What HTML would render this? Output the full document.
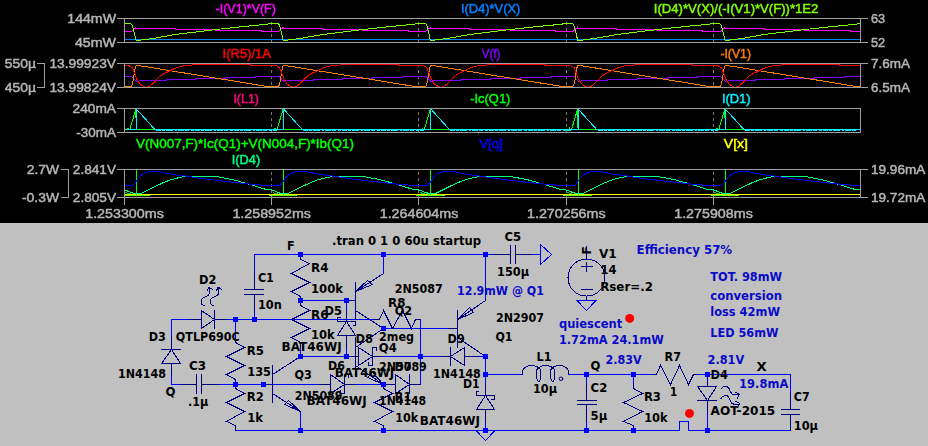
<!DOCTYPE html>
<html><head><meta charset="utf-8"><title>LTspice</title>
<style>
html,body{margin:0;padding:0;background:#c0c0c0;}
body{width:928px;height:446px;overflow:hidden;}
svg{display:block}
</style></head><body>
<svg width="928" height="446" viewBox="0 0 928 446">
<defs><filter id="nf" x="0" y="0" width="928" height="446" filterUnits="userSpaceOnUse"><feOffset dx="0" dy="0"/></filter></defs>
<rect x="0" y="0" width="928" height="446" fill="#c0c0c0"/>
<g shape-rendering="crispEdges">
<rect x="0" y="0" width="928" height="223" fill="#000"/>
<rect x="271" y="22" width="1" height="1" fill="#787878"/>
<rect x="271" y="23" width="1" height="1" fill="#787878"/>
<rect x="271" y="24" width="1" height="1" fill="#787878"/>
<rect x="271" y="28" width="1" height="1" fill="#787878"/>
<rect x="271" y="29" width="1" height="1" fill="#787878"/>
<rect x="271" y="30" width="1" height="1" fill="#787878"/>
<rect x="271" y="34" width="1" height="1" fill="#787878"/>
<rect x="271" y="35" width="1" height="1" fill="#787878"/>
<rect x="271" y="36" width="1" height="1" fill="#787878"/>
<rect x="271" y="40" width="1" height="1" fill="#787878"/>
<rect x="271" y="41" width="1" height="1" fill="#787878"/>
<rect x="418" y="22" width="1" height="1" fill="#787878"/>
<rect x="418" y="23" width="1" height="1" fill="#787878"/>
<rect x="418" y="24" width="1" height="1" fill="#787878"/>
<rect x="418" y="28" width="1" height="1" fill="#787878"/>
<rect x="418" y="29" width="1" height="1" fill="#787878"/>
<rect x="418" y="30" width="1" height="1" fill="#787878"/>
<rect x="418" y="34" width="1" height="1" fill="#787878"/>
<rect x="418" y="35" width="1" height="1" fill="#787878"/>
<rect x="418" y="36" width="1" height="1" fill="#787878"/>
<rect x="418" y="40" width="1" height="1" fill="#787878"/>
<rect x="418" y="41" width="1" height="1" fill="#787878"/>
<rect x="566" y="22" width="1" height="1" fill="#787878"/>
<rect x="566" y="23" width="1" height="1" fill="#787878"/>
<rect x="566" y="24" width="1" height="1" fill="#787878"/>
<rect x="566" y="28" width="1" height="1" fill="#787878"/>
<rect x="566" y="29" width="1" height="1" fill="#787878"/>
<rect x="566" y="30" width="1" height="1" fill="#787878"/>
<rect x="566" y="34" width="1" height="1" fill="#787878"/>
<rect x="566" y="35" width="1" height="1" fill="#787878"/>
<rect x="566" y="36" width="1" height="1" fill="#787878"/>
<rect x="566" y="40" width="1" height="1" fill="#787878"/>
<rect x="566" y="41" width="1" height="1" fill="#787878"/>
<rect x="713" y="22" width="1" height="1" fill="#787878"/>
<rect x="713" y="23" width="1" height="1" fill="#787878"/>
<rect x="713" y="24" width="1" height="1" fill="#787878"/>
<rect x="713" y="28" width="1" height="1" fill="#787878"/>
<rect x="713" y="29" width="1" height="1" fill="#787878"/>
<rect x="713" y="30" width="1" height="1" fill="#787878"/>
<rect x="713" y="34" width="1" height="1" fill="#787878"/>
<rect x="713" y="35" width="1" height="1" fill="#787878"/>
<rect x="713" y="36" width="1" height="1" fill="#787878"/>
<rect x="713" y="40" width="1" height="1" fill="#787878"/>
<rect x="713" y="41" width="1" height="1" fill="#787878"/>
<rect x="271" y="65" width="1" height="1" fill="#787878"/>
<rect x="271" y="66" width="1" height="1" fill="#787878"/>
<rect x="271" y="70" width="1" height="1" fill="#787878"/>
<rect x="271" y="71" width="1" height="1" fill="#787878"/>
<rect x="271" y="72" width="1" height="1" fill="#787878"/>
<rect x="271" y="76" width="1" height="1" fill="#787878"/>
<rect x="271" y="77" width="1" height="1" fill="#787878"/>
<rect x="271" y="78" width="1" height="1" fill="#787878"/>
<rect x="271" y="82" width="1" height="1" fill="#787878"/>
<rect x="271" y="83" width="1" height="1" fill="#787878"/>
<rect x="271" y="84" width="1" height="1" fill="#787878"/>
<rect x="418" y="65" width="1" height="1" fill="#787878"/>
<rect x="418" y="66" width="1" height="1" fill="#787878"/>
<rect x="418" y="70" width="1" height="1" fill="#787878"/>
<rect x="418" y="71" width="1" height="1" fill="#787878"/>
<rect x="418" y="72" width="1" height="1" fill="#787878"/>
<rect x="418" y="76" width="1" height="1" fill="#787878"/>
<rect x="418" y="77" width="1" height="1" fill="#787878"/>
<rect x="418" y="78" width="1" height="1" fill="#787878"/>
<rect x="418" y="82" width="1" height="1" fill="#787878"/>
<rect x="418" y="83" width="1" height="1" fill="#787878"/>
<rect x="418" y="84" width="1" height="1" fill="#787878"/>
<rect x="566" y="65" width="1" height="1" fill="#787878"/>
<rect x="566" y="66" width="1" height="1" fill="#787878"/>
<rect x="566" y="70" width="1" height="1" fill="#787878"/>
<rect x="566" y="71" width="1" height="1" fill="#787878"/>
<rect x="566" y="72" width="1" height="1" fill="#787878"/>
<rect x="566" y="76" width="1" height="1" fill="#787878"/>
<rect x="566" y="77" width="1" height="1" fill="#787878"/>
<rect x="566" y="78" width="1" height="1" fill="#787878"/>
<rect x="566" y="82" width="1" height="1" fill="#787878"/>
<rect x="566" y="83" width="1" height="1" fill="#787878"/>
<rect x="566" y="84" width="1" height="1" fill="#787878"/>
<rect x="713" y="65" width="1" height="1" fill="#787878"/>
<rect x="713" y="66" width="1" height="1" fill="#787878"/>
<rect x="713" y="70" width="1" height="1" fill="#787878"/>
<rect x="713" y="71" width="1" height="1" fill="#787878"/>
<rect x="713" y="72" width="1" height="1" fill="#787878"/>
<rect x="713" y="76" width="1" height="1" fill="#787878"/>
<rect x="713" y="77" width="1" height="1" fill="#787878"/>
<rect x="713" y="78" width="1" height="1" fill="#787878"/>
<rect x="713" y="82" width="1" height="1" fill="#787878"/>
<rect x="713" y="83" width="1" height="1" fill="#787878"/>
<rect x="713" y="84" width="1" height="1" fill="#787878"/>
<rect x="271" y="112" width="1" height="1" fill="#787878"/>
<rect x="271" y="113" width="1" height="1" fill="#787878"/>
<rect x="271" y="114" width="1" height="1" fill="#787878"/>
<rect x="271" y="118" width="1" height="1" fill="#787878"/>
<rect x="271" y="119" width="1" height="1" fill="#787878"/>
<rect x="271" y="120" width="1" height="1" fill="#787878"/>
<rect x="271" y="124" width="1" height="1" fill="#787878"/>
<rect x="271" y="125" width="1" height="1" fill="#787878"/>
<rect x="271" y="126" width="1" height="1" fill="#787878"/>
<rect x="271" y="130" width="1" height="1" fill="#787878"/>
<rect x="271" y="131" width="1" height="1" fill="#787878"/>
<rect x="418" y="112" width="1" height="1" fill="#787878"/>
<rect x="418" y="113" width="1" height="1" fill="#787878"/>
<rect x="418" y="114" width="1" height="1" fill="#787878"/>
<rect x="418" y="118" width="1" height="1" fill="#787878"/>
<rect x="418" y="119" width="1" height="1" fill="#787878"/>
<rect x="418" y="120" width="1" height="1" fill="#787878"/>
<rect x="418" y="124" width="1" height="1" fill="#787878"/>
<rect x="418" y="125" width="1" height="1" fill="#787878"/>
<rect x="418" y="126" width="1" height="1" fill="#787878"/>
<rect x="418" y="130" width="1" height="1" fill="#787878"/>
<rect x="418" y="131" width="1" height="1" fill="#787878"/>
<rect x="566" y="112" width="1" height="1" fill="#787878"/>
<rect x="566" y="113" width="1" height="1" fill="#787878"/>
<rect x="566" y="114" width="1" height="1" fill="#787878"/>
<rect x="566" y="118" width="1" height="1" fill="#787878"/>
<rect x="566" y="119" width="1" height="1" fill="#787878"/>
<rect x="566" y="120" width="1" height="1" fill="#787878"/>
<rect x="566" y="124" width="1" height="1" fill="#787878"/>
<rect x="566" y="125" width="1" height="1" fill="#787878"/>
<rect x="566" y="126" width="1" height="1" fill="#787878"/>
<rect x="566" y="130" width="1" height="1" fill="#787878"/>
<rect x="566" y="131" width="1" height="1" fill="#787878"/>
<rect x="713" y="112" width="1" height="1" fill="#787878"/>
<rect x="713" y="113" width="1" height="1" fill="#787878"/>
<rect x="713" y="114" width="1" height="1" fill="#787878"/>
<rect x="713" y="118" width="1" height="1" fill="#787878"/>
<rect x="713" y="119" width="1" height="1" fill="#787878"/>
<rect x="713" y="120" width="1" height="1" fill="#787878"/>
<rect x="713" y="124" width="1" height="1" fill="#787878"/>
<rect x="713" y="125" width="1" height="1" fill="#787878"/>
<rect x="713" y="126" width="1" height="1" fill="#787878"/>
<rect x="713" y="130" width="1" height="1" fill="#787878"/>
<rect x="713" y="131" width="1" height="1" fill="#787878"/>
<rect x="271" y="172" width="1" height="1" fill="#787878"/>
<rect x="271" y="173" width="1" height="1" fill="#787878"/>
<rect x="271" y="174" width="1" height="1" fill="#787878"/>
<rect x="271" y="178" width="1" height="1" fill="#787878"/>
<rect x="271" y="179" width="1" height="1" fill="#787878"/>
<rect x="271" y="180" width="1" height="1" fill="#787878"/>
<rect x="271" y="184" width="1" height="1" fill="#787878"/>
<rect x="271" y="185" width="1" height="1" fill="#787878"/>
<rect x="271" y="186" width="1" height="1" fill="#787878"/>
<rect x="271" y="190" width="1" height="1" fill="#787878"/>
<rect x="271" y="191" width="1" height="1" fill="#787878"/>
<rect x="271" y="192" width="1" height="1" fill="#787878"/>
<rect x="271" y="196" width="1" height="1" fill="#787878"/>
<rect x="418" y="172" width="1" height="1" fill="#787878"/>
<rect x="418" y="173" width="1" height="1" fill="#787878"/>
<rect x="418" y="174" width="1" height="1" fill="#787878"/>
<rect x="418" y="178" width="1" height="1" fill="#787878"/>
<rect x="418" y="179" width="1" height="1" fill="#787878"/>
<rect x="418" y="180" width="1" height="1" fill="#787878"/>
<rect x="418" y="184" width="1" height="1" fill="#787878"/>
<rect x="418" y="185" width="1" height="1" fill="#787878"/>
<rect x="418" y="186" width="1" height="1" fill="#787878"/>
<rect x="418" y="190" width="1" height="1" fill="#787878"/>
<rect x="418" y="191" width="1" height="1" fill="#787878"/>
<rect x="418" y="192" width="1" height="1" fill="#787878"/>
<rect x="418" y="196" width="1" height="1" fill="#787878"/>
<rect x="566" y="172" width="1" height="1" fill="#787878"/>
<rect x="566" y="173" width="1" height="1" fill="#787878"/>
<rect x="566" y="174" width="1" height="1" fill="#787878"/>
<rect x="566" y="178" width="1" height="1" fill="#787878"/>
<rect x="566" y="179" width="1" height="1" fill="#787878"/>
<rect x="566" y="180" width="1" height="1" fill="#787878"/>
<rect x="566" y="184" width="1" height="1" fill="#787878"/>
<rect x="566" y="185" width="1" height="1" fill="#787878"/>
<rect x="566" y="186" width="1" height="1" fill="#787878"/>
<rect x="566" y="190" width="1" height="1" fill="#787878"/>
<rect x="566" y="191" width="1" height="1" fill="#787878"/>
<rect x="566" y="192" width="1" height="1" fill="#787878"/>
<rect x="566" y="196" width="1" height="1" fill="#787878"/>
<rect x="713" y="172" width="1" height="1" fill="#787878"/>
<rect x="713" y="173" width="1" height="1" fill="#787878"/>
<rect x="713" y="174" width="1" height="1" fill="#787878"/>
<rect x="713" y="178" width="1" height="1" fill="#787878"/>
<rect x="713" y="179" width="1" height="1" fill="#787878"/>
<rect x="713" y="180" width="1" height="1" fill="#787878"/>
<rect x="713" y="184" width="1" height="1" fill="#787878"/>
<rect x="713" y="185" width="1" height="1" fill="#787878"/>
<rect x="713" y="186" width="1" height="1" fill="#787878"/>
<rect x="713" y="190" width="1" height="1" fill="#787878"/>
<rect x="713" y="191" width="1" height="1" fill="#787878"/>
<rect x="713" y="192" width="1" height="1" fill="#787878"/>
<rect x="713" y="196" width="1" height="1" fill="#787878"/>
<polyline points="124.50,39.50 271.75,39.50 271.75,39.50 419.00,39.50 419.00,39.50 566.25,39.50 566.25,39.50 713.50,39.50 713.50,39.50 860.50,39.50" fill="none" stroke="#0080ff" stroke-width="1" />
<polyline points="124.50,31.50 131.00,31.50 132.50,30.50 134.00,28.50 135.30,28.40 135.80,27.40 136.40,28.40 175.00,28.40 175.00,29.50 215.50,29.50 215.50,30.50 261.20,30.50 261.20,31.50 271.75,31.50 271.75,31.50 278.25,31.50 279.75,30.50 281.25,28.50 282.55,28.40 283.05,27.40 283.65,28.40 322.25,28.40 322.25,29.50 362.75,29.50 362.75,30.50 408.45,30.50 408.45,31.50 419.00,31.50 419.00,31.50 425.50,31.50 427.00,30.50 428.50,28.50 429.80,28.40 430.30,27.40 430.90,28.40 469.50,28.40 469.50,29.50 510.00,29.50 510.00,30.50 555.70,30.50 555.70,31.50 566.25,31.50 566.25,31.50 572.75,31.50 574.25,30.50 575.75,28.50 577.05,28.40 577.55,27.40 578.15,28.40 616.75,28.40 616.75,29.50 657.25,29.50 657.25,30.50 702.95,30.50 702.95,31.50 713.50,31.50 713.50,31.50 720.00,31.50 721.50,30.50 723.00,28.50 724.30,28.40 724.80,27.40 725.40,28.40 764.00,28.40 764.00,29.50 804.50,29.50 804.50,30.50 850.20,30.50 850.20,31.50 860.50,31.50" fill="none" stroke="#ff00ff" stroke-width="1" />
<polyline points="124.50,23.50 130.70,23.50 131.80,24.50 132.80,27.00 133.70,30.50 134.70,35.00 135.70,39.50 136.10,40.40 138.00,40.40 154.00,38.30 175.30,34.50 216.00,29.50 244.50,26.40 267.50,24.20 269.00,23.50 271.75,23.50 271.75,23.50 277.95,23.50 279.05,24.50 280.05,27.00 280.95,30.50 281.95,35.00 282.95,39.50 283.35,40.40 285.25,40.40 301.25,38.30 322.55,34.50 363.25,29.50 391.75,26.40 414.75,24.20 416.25,23.50 419.00,23.50 419.00,23.50 425.20,23.50 426.30,24.50 427.30,27.00 428.20,30.50 429.20,35.00 430.20,39.50 430.60,40.40 432.50,40.40 448.50,38.30 469.80,34.50 510.50,29.50 539.00,26.40 562.00,24.20 563.50,23.50 566.25,23.50 566.25,23.50 572.45,23.50 573.55,24.50 574.55,27.00 575.45,30.50 576.45,35.00 577.45,39.50 577.85,40.40 579.75,40.40 595.75,38.30 617.05,34.50 657.75,29.50 686.25,26.40 709.25,24.20 710.75,23.50 713.50,23.50 713.50,23.50 719.70,23.50 720.80,24.50 721.80,27.00 722.70,30.50 723.70,35.00 724.70,39.50 725.10,40.40 727.00,40.40 743.00,38.30 764.30,34.50 805.00,29.50 833.50,26.40 856.50,24.20 858.00,23.50 860.50,23.50" fill="none" stroke="#80ff00" stroke-width="1" />
<polyline points="124.50,76.50 131.50,76.50 133.50,78.00 135.00,80.00 136.50,81.40 138.50,81.40 140.00,80.40 166.00,80.40 166.00,79.40 195.50,79.40 195.50,78.40 225.50,78.40 225.50,77.40 255.50,77.40 255.50,76.50 271.75,76.50 271.75,76.50 278.75,76.50 280.75,78.00 282.25,80.00 283.75,81.40 285.75,81.40 287.25,80.40 313.25,80.40 313.25,79.40 342.75,79.40 342.75,78.40 372.75,78.40 372.75,77.40 402.75,77.40 402.75,76.50 419.00,76.50 419.00,76.50 426.00,76.50 428.00,78.00 429.50,80.00 431.00,81.40 433.00,81.40 434.50,80.40 460.50,80.40 460.50,79.40 490.00,79.40 490.00,78.40 520.00,78.40 520.00,77.40 550.00,77.40 550.00,76.50 566.25,76.50 566.25,76.50 573.25,76.50 575.25,78.00 576.75,80.00 578.25,81.40 580.25,81.40 581.75,80.40 607.75,80.40 607.75,79.40 637.25,79.40 637.25,78.40 667.25,78.40 667.25,77.40 697.25,77.40 697.25,76.50 713.50,76.50 713.50,76.50 720.50,76.50 722.50,78.00 724.00,80.00 725.50,81.40 727.50,81.40 729.00,80.40 755.00,80.40 755.00,79.40 784.50,79.40 784.50,78.40 814.50,78.40 814.50,77.40 844.50,77.40 844.50,76.50 860.50,76.50" fill="none" stroke="#8000ff" stroke-width="1" />
<polyline points="124.50,86.50 131.00,86.50 132.00,85.00 133.20,80.00 134.10,74.00 135.10,68.00 136.00,65.70 137.50,65.50 144.50,66.50 267.50,86.50 271.75,86.50 271.75,86.50 278.25,86.50 279.25,85.00 280.45,80.00 281.35,74.00 282.35,68.00 283.25,65.70 284.75,65.50 291.75,66.50 414.75,86.50 419.00,86.50 419.00,86.50 425.50,86.50 426.50,85.00 427.70,80.00 428.60,74.00 429.60,68.00 430.50,65.70 432.00,65.50 439.00,66.50 562.00,86.50 566.25,86.50 566.25,86.50 572.75,86.50 573.75,85.00 574.95,80.00 575.85,74.00 576.85,68.00 577.75,65.70 579.25,65.50 586.25,66.50 709.25,86.50 713.50,86.50 713.50,86.50 720.00,86.50 721.00,85.00 722.20,80.00 723.10,74.00 724.10,68.00 725.00,65.70 726.50,65.50 733.50,66.50 856.50,86.50 860.50,86.50" fill="none" stroke="#ff8000" stroke-width="1" />
<polyline points="124.50,65.50 128.50,65.50 132.30,67.60 134.80,73.80 136.70,78.90 139.80,83.90 143.00,86.10 146.10,87.30 149.20,86.40 152.40,84.10 156.20,80.10 159.90,76.30 163.70,73.80 166.80,72.30 171.20,70.10 176.20,67.80 181.20,66.30 186.30,65.30 192.50,65.00 195.50,64.50 250.90,64.50 250.90,65.50 271.75,65.50 271.75,65.50 275.75,65.50 279.55,67.60 282.05,73.80 283.95,78.90 287.05,83.90 290.25,86.10 293.35,87.30 296.45,86.40 299.65,84.10 303.45,80.10 307.15,76.30 310.95,73.80 314.05,72.30 318.45,70.10 323.45,67.80 328.45,66.30 333.55,65.30 339.75,65.00 342.75,64.50 398.15,64.50 398.15,65.50 419.00,65.50 419.00,65.50 423.00,65.50 426.80,67.60 429.30,73.80 431.20,78.90 434.30,83.90 437.50,86.10 440.60,87.30 443.70,86.40 446.90,84.10 450.70,80.10 454.40,76.30 458.20,73.80 461.30,72.30 465.70,70.10 470.70,67.80 475.70,66.30 480.80,65.30 487.00,65.00 490.00,64.50 545.40,64.50 545.40,65.50 566.25,65.50 566.25,65.50 570.25,65.50 574.05,67.60 576.55,73.80 578.45,78.90 581.55,83.90 584.75,86.10 587.85,87.30 590.95,86.40 594.15,84.10 597.95,80.10 601.65,76.30 605.45,73.80 608.55,72.30 612.95,70.10 617.95,67.80 622.95,66.30 628.05,65.30 634.25,65.00 637.25,64.50 692.65,64.50 692.65,65.50 713.50,65.50 713.50,65.50 717.50,65.50 721.30,67.60 723.80,73.80 725.70,78.90 728.80,83.90 732.00,86.10 735.10,87.30 738.20,86.40 741.40,84.10 745.20,80.10 748.90,76.30 752.70,73.80 755.80,72.30 760.20,70.10 765.20,67.80 770.20,66.30 775.30,65.30 781.50,65.00 784.50,64.50 839.90,64.50 839.90,65.50 860.50,65.50" fill="none" stroke="#ff0000" stroke-width="1" />
<polyline points="124.50,129.50 127.00,129.50 127.80,128.30 128.80,129.50 129.80,129.50 135.80,109.30 136.30,129.50 154.90,129.50 271.75,129.50 271.75,129.50 274.25,129.50 275.05,128.30 276.05,129.50 277.05,129.50 283.05,109.30 283.55,129.50 302.15,129.50 419.00,129.50 419.00,129.50 421.50,129.50 422.30,128.30 423.30,129.50 424.30,129.50 430.30,109.30 430.80,129.50 449.40,129.50 566.25,129.50 566.25,129.50 568.75,129.50 569.55,128.30 570.55,129.50 571.55,129.50 577.55,109.30 578.05,129.50 596.65,129.50 713.50,129.50 713.50,129.50 716.00,129.50 716.80,128.30 717.80,129.50 718.80,129.50 724.80,109.30 725.30,129.50 743.90,129.50 860.50,129.50" fill="none" stroke="#00ff00" stroke-width="1" />
<rect x="135.0" y="108" width="1.5" height="1" fill="#ff0080"/>
<rect x="282.2" y="108" width="1.5" height="1" fill="#ff0080"/>
<rect x="429.5" y="108" width="1.5" height="1" fill="#ff0080"/>
<rect x="576.8" y="108" width="1.5" height="1" fill="#ff0080"/>
<rect x="724.0" y="108" width="1.5" height="1" fill="#ff0080"/>
<polyline points="124.50,129.50 136.40,129.50 136.40,109.50 136.80,109.50 154.90,129.50 271.75,129.50 271.75,129.50 283.65,129.50 283.65,109.50 284.05,109.50 302.15,129.50 419.00,129.50 419.00,129.50 430.90,129.50 430.90,109.50 431.30,109.50 449.40,129.50 566.25,129.50 566.25,129.50 578.15,129.50 578.15,109.50 578.55,109.50 596.65,129.50 713.50,129.50 713.50,129.50 725.40,129.50 725.40,109.50 725.80,109.50 743.90,129.50 860.50,129.50" fill="none" stroke="#00f0ff" stroke-width="1" />
<rect x="154.9" y="129" width="121.8" height="1" fill="#00f0ff"/>
<rect x="155.9" y="130" width="5" height="1" fill="#00f0ff"/>
<rect x="161.9" y="130" width="3" height="1" fill="#00f0ff"/>
<rect x="165.9" y="130" width="7" height="1" fill="#00f0ff"/>
<rect x="174.9" y="130" width="2" height="1" fill="#00f0ff"/>
<rect x="177.9" y="130" width="6" height="1" fill="#00f0ff"/>
<rect x="184.9" y="130" width="4" height="1" fill="#00f0ff"/>
<rect x="190.9" y="130" width="3" height="1" fill="#00f0ff"/>
<rect x="194.9" y="130" width="5" height="1" fill="#00f0ff"/>
<rect x="200.9" y="130" width="3" height="1" fill="#00f0ff"/>
<rect x="204.9" y="130" width="7" height="1" fill="#00f0ff"/>
<rect x="213.9" y="130" width="2" height="1" fill="#00f0ff"/>
<rect x="216.9" y="130" width="6" height="1" fill="#00f0ff"/>
<rect x="223.9" y="130" width="4" height="1" fill="#00f0ff"/>
<rect x="229.9" y="130" width="3" height="1" fill="#00f0ff"/>
<rect x="233.9" y="130" width="5" height="1" fill="#00f0ff"/>
<rect x="239.9" y="130" width="3" height="1" fill="#00f0ff"/>
<rect x="243.9" y="130" width="7" height="1" fill="#00f0ff"/>
<rect x="252.9" y="130" width="2" height="1" fill="#00f0ff"/>
<rect x="255.9" y="130" width="6" height="1" fill="#00f0ff"/>
<rect x="262.9" y="130" width="4" height="1" fill="#00f0ff"/>
<rect x="268.9" y="130" width="3" height="1" fill="#00f0ff"/>
<rect x="272.9" y="130" width="3.8500000000000227" height="1" fill="#00f0ff"/>
<rect x="302.1" y="129" width="121.9" height="1" fill="#00f0ff"/>
<rect x="303.1" y="130" width="5" height="1" fill="#00f0ff"/>
<rect x="309.1" y="130" width="3" height="1" fill="#00f0ff"/>
<rect x="313.1" y="130" width="7" height="1" fill="#00f0ff"/>
<rect x="322.1" y="130" width="2" height="1" fill="#00f0ff"/>
<rect x="325.1" y="130" width="6" height="1" fill="#00f0ff"/>
<rect x="332.1" y="130" width="4" height="1" fill="#00f0ff"/>
<rect x="338.1" y="130" width="3" height="1" fill="#00f0ff"/>
<rect x="342.1" y="130" width="5" height="1" fill="#00f0ff"/>
<rect x="348.1" y="130" width="3" height="1" fill="#00f0ff"/>
<rect x="352.1" y="130" width="7" height="1" fill="#00f0ff"/>
<rect x="361.1" y="130" width="2" height="1" fill="#00f0ff"/>
<rect x="364.1" y="130" width="6" height="1" fill="#00f0ff"/>
<rect x="371.1" y="130" width="4" height="1" fill="#00f0ff"/>
<rect x="377.1" y="130" width="3" height="1" fill="#00f0ff"/>
<rect x="381.1" y="130" width="5" height="1" fill="#00f0ff"/>
<rect x="387.1" y="130" width="3" height="1" fill="#00f0ff"/>
<rect x="391.1" y="130" width="7" height="1" fill="#00f0ff"/>
<rect x="400.1" y="130" width="2" height="1" fill="#00f0ff"/>
<rect x="403.1" y="130" width="6" height="1" fill="#00f0ff"/>
<rect x="410.1" y="130" width="4" height="1" fill="#00f0ff"/>
<rect x="416.1" y="130" width="3" height="1" fill="#00f0ff"/>
<rect x="420.1" y="130" width="3.8500000000000227" height="1" fill="#00f0ff"/>
<rect x="449.4" y="129" width="121.9" height="1" fill="#00f0ff"/>
<rect x="450.4" y="130" width="5" height="1" fill="#00f0ff"/>
<rect x="456.4" y="130" width="3" height="1" fill="#00f0ff"/>
<rect x="460.4" y="130" width="7" height="1" fill="#00f0ff"/>
<rect x="469.4" y="130" width="2" height="1" fill="#00f0ff"/>
<rect x="472.4" y="130" width="6" height="1" fill="#00f0ff"/>
<rect x="479.4" y="130" width="4" height="1" fill="#00f0ff"/>
<rect x="485.4" y="130" width="3" height="1" fill="#00f0ff"/>
<rect x="489.4" y="130" width="5" height="1" fill="#00f0ff"/>
<rect x="495.4" y="130" width="3" height="1" fill="#00f0ff"/>
<rect x="499.4" y="130" width="7" height="1" fill="#00f0ff"/>
<rect x="508.4" y="130" width="2" height="1" fill="#00f0ff"/>
<rect x="511.4" y="130" width="6" height="1" fill="#00f0ff"/>
<rect x="518.4" y="130" width="4" height="1" fill="#00f0ff"/>
<rect x="524.4" y="130" width="3" height="1" fill="#00f0ff"/>
<rect x="528.4" y="130" width="5" height="1" fill="#00f0ff"/>
<rect x="534.4" y="130" width="3" height="1" fill="#00f0ff"/>
<rect x="538.4" y="130" width="7" height="1" fill="#00f0ff"/>
<rect x="547.4" y="130" width="2" height="1" fill="#00f0ff"/>
<rect x="550.4" y="130" width="6" height="1" fill="#00f0ff"/>
<rect x="557.4" y="130" width="4" height="1" fill="#00f0ff"/>
<rect x="563.4" y="130" width="3" height="1" fill="#00f0ff"/>
<rect x="567.4" y="130" width="3.8500000000000227" height="1" fill="#00f0ff"/>
<rect x="596.6" y="129" width="121.9" height="1" fill="#00f0ff"/>
<rect x="597.6" y="130" width="5" height="1" fill="#00f0ff"/>
<rect x="603.6" y="130" width="3" height="1" fill="#00f0ff"/>
<rect x="607.6" y="130" width="7" height="1" fill="#00f0ff"/>
<rect x="616.6" y="130" width="2" height="1" fill="#00f0ff"/>
<rect x="619.6" y="130" width="6" height="1" fill="#00f0ff"/>
<rect x="626.6" y="130" width="4" height="1" fill="#00f0ff"/>
<rect x="632.6" y="130" width="3" height="1" fill="#00f0ff"/>
<rect x="636.6" y="130" width="5" height="1" fill="#00f0ff"/>
<rect x="642.6" y="130" width="3" height="1" fill="#00f0ff"/>
<rect x="646.6" y="130" width="7" height="1" fill="#00f0ff"/>
<rect x="655.6" y="130" width="2" height="1" fill="#00f0ff"/>
<rect x="658.6" y="130" width="6" height="1" fill="#00f0ff"/>
<rect x="665.6" y="130" width="4" height="1" fill="#00f0ff"/>
<rect x="671.6" y="130" width="3" height="1" fill="#00f0ff"/>
<rect x="675.6" y="130" width="5" height="1" fill="#00f0ff"/>
<rect x="681.6" y="130" width="3" height="1" fill="#00f0ff"/>
<rect x="685.6" y="130" width="7" height="1" fill="#00f0ff"/>
<rect x="694.6" y="130" width="2" height="1" fill="#00f0ff"/>
<rect x="697.6" y="130" width="6" height="1" fill="#00f0ff"/>
<rect x="704.6" y="130" width="4" height="1" fill="#00f0ff"/>
<rect x="710.6" y="130" width="3" height="1" fill="#00f0ff"/>
<rect x="714.6" y="130" width="3.8500000000000227" height="1" fill="#00f0ff"/>
<rect x="743.9" y="129" width="116.6" height="1" fill="#00f0ff"/>
<rect x="744.9" y="130" width="5" height="1" fill="#00f0ff"/>
<rect x="750.9" y="130" width="3" height="1" fill="#00f0ff"/>
<rect x="754.9" y="130" width="7" height="1" fill="#00f0ff"/>
<rect x="763.9" y="130" width="2" height="1" fill="#00f0ff"/>
<rect x="766.9" y="130" width="6" height="1" fill="#00f0ff"/>
<rect x="773.9" y="130" width="4" height="1" fill="#00f0ff"/>
<rect x="779.9" y="130" width="3" height="1" fill="#00f0ff"/>
<rect x="783.9" y="130" width="5" height="1" fill="#00f0ff"/>
<rect x="789.9" y="130" width="3" height="1" fill="#00f0ff"/>
<rect x="793.9" y="130" width="7" height="1" fill="#00f0ff"/>
<rect x="802.9" y="130" width="2" height="1" fill="#00f0ff"/>
<rect x="805.9" y="130" width="6" height="1" fill="#00f0ff"/>
<rect x="812.9" y="130" width="4" height="1" fill="#00f0ff"/>
<rect x="818.9" y="130" width="3" height="1" fill="#00f0ff"/>
<rect x="822.9" y="130" width="5" height="1" fill="#00f0ff"/>
<rect x="828.9" y="130" width="3" height="1" fill="#00f0ff"/>
<rect x="832.9" y="130" width="7" height="1" fill="#00f0ff"/>
<rect x="841.9" y="130" width="2" height="1" fill="#00f0ff"/>
<rect x="844.9" y="130" width="6" height="1" fill="#00f0ff"/>
<rect x="851.9" y="130" width="4" height="1" fill="#00f0ff"/>
<rect x="124.5" y="129" width="5" height="1" fill="#00f0ff"/>
<polyline points="124.50,194.50 271.75,194.50 271.75,194.50 419.00,194.50 419.00,194.50 566.25,194.50 566.25,194.50 713.50,194.50 713.50,194.50 860.50,194.50" fill="none" stroke="#ffff00" stroke-width="1" />
<rect x="124.5" y="194" width="25.5" height="2" fill="#e8f000"/>
<rect x="124.5" y="195" width="25.5" height="1" fill="#60ff00"/>
<rect x="136" y="170" width="1.3" height="25" fill="#00ff00"/>
<polyline points="125.50,192.50 128.50,193.50 131.50,192.80 134.00,194.00 136.00,193.00" fill="none" stroke="#00d000" stroke-width="1" />
<rect x="268.8" y="194" width="28.5" height="2" fill="#e8f000"/>
<rect x="268.8" y="195" width="28.5" height="1" fill="#60ff00"/>
<rect x="283" y="170" width="1.3" height="25" fill="#00ff00"/>
<polyline points="272.75,192.50 275.75,193.50 278.75,192.80 281.25,194.00 283.25,193.00" fill="none" stroke="#00d000" stroke-width="1" />
<rect x="416.0" y="194" width="28.5" height="2" fill="#e8f000"/>
<rect x="416.0" y="195" width="28.5" height="1" fill="#60ff00"/>
<rect x="430" y="170" width="1.3" height="25" fill="#00ff00"/>
<polyline points="420.00,192.50 423.00,193.50 426.00,192.80 428.50,194.00 430.50,193.00" fill="none" stroke="#00d000" stroke-width="1" />
<rect x="563.2" y="194" width="28.5" height="2" fill="#e8f000"/>
<rect x="563.2" y="195" width="28.5" height="1" fill="#60ff00"/>
<rect x="578" y="170" width="1.3" height="25" fill="#00ff00"/>
<polyline points="567.25,192.50 570.25,193.50 573.25,192.80 575.75,194.00 577.75,193.00" fill="none" stroke="#00d000" stroke-width="1" />
<rect x="710.5" y="194" width="28.5" height="2" fill="#e8f000"/>
<rect x="710.5" y="195" width="28.5" height="1" fill="#60ff00"/>
<rect x="725" y="170" width="1.3" height="25" fill="#00ff00"/>
<polyline points="714.50,192.50 717.50,193.50 720.50,192.80 723.00,194.00 725.00,193.00" fill="none" stroke="#00d000" stroke-width="1" />
<polyline points="124.50,190.00 127.50,191.00 131.00,192.50 135.00,193.50 138.50,193.70 141.50,193.30 144.50,191.80 149.00,189.50 155.50,186.30 163.00,182.80 169.50,180.20 175.00,178.60 180.50,177.30 186.50,176.40 190.50,176.20 214.50,176.30 216.50,176.60 232.50,179.60 248.50,184.00 264.50,189.00 271.75,190.00 271.75,190.00 274.75,191.00 278.25,192.50 282.25,193.50 285.75,193.70 288.75,193.30 291.75,191.80 296.25,189.50 302.75,186.30 310.25,182.80 316.75,180.20 322.25,178.60 327.75,177.30 333.75,176.40 337.75,176.20 361.75,176.30 363.75,176.60 379.75,179.60 395.75,184.00 411.75,189.00 419.00,190.00 419.00,190.00 422.00,191.00 425.50,192.50 429.50,193.50 433.00,193.70 436.00,193.30 439.00,191.80 443.50,189.50 450.00,186.30 457.50,182.80 464.00,180.20 469.50,178.60 475.00,177.30 481.00,176.40 485.00,176.20 509.00,176.30 511.00,176.60 527.00,179.60 543.00,184.00 559.00,189.00 566.25,190.00 566.25,190.00 569.25,191.00 572.75,192.50 576.75,193.50 580.25,193.70 583.25,193.30 586.25,191.80 590.75,189.50 597.25,186.30 604.75,182.80 611.25,180.20 616.75,178.60 622.25,177.30 628.25,176.40 632.25,176.20 656.25,176.30 658.25,176.60 674.25,179.60 690.25,184.00 706.25,189.00 713.50,190.00 713.50,190.00 716.50,191.00 720.00,192.50 724.00,193.50 727.50,193.70 730.50,193.30 733.50,191.80 738.00,189.50 744.50,186.30 752.00,182.80 758.50,180.20 764.00,178.60 769.50,177.30 775.50,176.40 779.50,176.20 803.50,176.30 805.50,176.60 821.50,179.60 837.50,184.00 853.50,189.00 860.50,189.97" fill="none" stroke="#00ff80" stroke-width="1" />
<polyline points="124.50,185.50 132.50,185.50 134.00,184.30 135.85,181.90 139.15,177.00 142.35,174.20 145.65,172.60 150.50,171.40 158.00,171.40 167.00,173.40 173.50,174.50 187.00,176.30 201.50,178.50 216.00,180.30 232.50,182.20 248.50,184.00 261.50,185.10 268.50,185.50 271.75,185.50 271.75,185.50 279.75,185.50 281.25,184.30 283.10,181.90 286.40,177.00 289.60,174.20 292.90,172.60 297.75,171.40 305.25,171.40 314.25,173.40 320.75,174.50 334.25,176.30 348.75,178.50 363.25,180.30 379.75,182.20 395.75,184.00 408.75,185.10 415.75,185.50 419.00,185.50 419.00,185.50 427.00,185.50 428.50,184.30 430.35,181.90 433.65,177.00 436.85,174.20 440.15,172.60 445.00,171.40 452.50,171.40 461.50,173.40 468.00,174.50 481.50,176.30 496.00,178.50 510.50,180.30 527.00,182.20 543.00,184.00 556.00,185.10 563.00,185.50 566.25,185.50 566.25,185.50 574.25,185.50 575.75,184.30 577.60,181.90 580.90,177.00 584.10,174.20 587.40,172.60 592.25,171.40 599.75,171.40 608.75,173.40 615.25,174.50 628.75,176.30 643.25,178.50 657.75,180.30 674.25,182.20 690.25,184.00 703.25,185.10 710.25,185.50 713.50,185.50 713.50,185.50 721.50,185.50 723.00,184.30 724.85,181.90 728.15,177.00 731.35,174.20 734.65,172.60 739.50,171.40 747.00,171.40 756.00,173.40 762.50,174.50 776.00,176.30 790.50,178.50 805.00,180.30 821.50,182.20 837.50,184.00 850.50,185.10 857.50,185.50 860.50,185.50" fill="none" stroke="#0000ff" stroke-width="1" />
<rect x="124.5" y="18.5" width="736.0" height="24.0" fill="none" stroke="#a0a0a0" stroke-width="1"/>
<line x1="117.00" y1="18.50" x2="124.50" y2="18.50" stroke="#a0a0a0" stroke-width="1" />
<line x1="117.00" y1="42.50" x2="124.50" y2="42.50" stroke="#a0a0a0" stroke-width="1" />
<line x1="860.50" y1="18.50" x2="868.00" y2="18.50" stroke="#a0a0a0" stroke-width="1" />
<line x1="860.50" y1="42.50" x2="868.00" y2="42.50" stroke="#a0a0a0" stroke-width="1" />
<rect x="124.5" y="63.5" width="736.0" height="24.0" fill="none" stroke="#a0a0a0" stroke-width="1"/>
<line x1="117.00" y1="63.50" x2="124.50" y2="63.50" stroke="#a0a0a0" stroke-width="1" />
<line x1="117.00" y1="87.50" x2="124.50" y2="87.50" stroke="#a0a0a0" stroke-width="1" />
<line x1="860.50" y1="63.50" x2="868.00" y2="63.50" stroke="#a0a0a0" stroke-width="1" />
<line x1="860.50" y1="87.50" x2="868.00" y2="87.50" stroke="#a0a0a0" stroke-width="1" />
<rect x="124.5" y="108.5" width="736.0" height="24.0" fill="none" stroke="#a0a0a0" stroke-width="1"/>
<line x1="117.00" y1="108.50" x2="124.50" y2="108.50" stroke="#a0a0a0" stroke-width="1" />
<line x1="117.00" y1="132.50" x2="124.50" y2="132.50" stroke="#a0a0a0" stroke-width="1" />
<rect x="124.5" y="169.5" width="736.0" height="28.0" fill="none" stroke="#a0a0a0" stroke-width="1"/>
<line x1="117.00" y1="169.50" x2="124.50" y2="169.50" stroke="#a0a0a0" stroke-width="1" />
<line x1="117.00" y1="197.50" x2="124.50" y2="197.50" stroke="#a0a0a0" stroke-width="1" />
<line x1="860.50" y1="169.50" x2="868.00" y2="169.50" stroke="#a0a0a0" stroke-width="1" />
<line x1="860.50" y1="197.50" x2="868.00" y2="197.50" stroke="#a0a0a0" stroke-width="1" />
<polyline points="37.00,63.50 44.50,63.50 44.50,87.50 37.00,87.50" fill="none" stroke="#a0a0a0" stroke-width="1" />
<polyline points="61.00,169.50 68.50,169.50 68.50,197.50 61.00,197.50" fill="none" stroke="#a0a0a0" stroke-width="1" />
<line x1="124.50" y1="197.50" x2="124.50" y2="205.00" stroke="#a0a0a0" stroke-width="1" />
<line x1="271.50" y1="197.50" x2="271.50" y2="205.00" stroke="#a0a0a0" stroke-width="1" />
<line x1="418.50" y1="197.50" x2="418.50" y2="205.00" stroke="#a0a0a0" stroke-width="1" />
<line x1="566.50" y1="197.50" x2="566.50" y2="205.00" stroke="#a0a0a0" stroke-width="1" />
<line x1="713.50" y1="197.50" x2="713.50" y2="205.00" stroke="#a0a0a0" stroke-width="1" />
</g>
<g font-family="'Liberation Sans', Arial, sans-serif" style="white-space:pre" filter="url(#nf)">
<text x="67.3" y="23.2" fill="#b4b4b4" stroke="#b4b4b4" stroke-width="0.5" font-size="13.7" textLength="48.7" lengthAdjust="spacingAndGlyphs">144mW</text>
<text x="74.9" y="47.2" fill="#b4b4b4" stroke="#b4b4b4" stroke-width="0.5" font-size="13.7" textLength="41.1" lengthAdjust="spacingAndGlyphs">45mW</text>
<text x="4.8" y="68.2" fill="#b4b4b4" stroke="#b4b4b4" stroke-width="0.5" font-size="13.7" textLength="31.2" lengthAdjust="spacingAndGlyphs">550µ</text>
<text x="4.8" y="92.2" fill="#b4b4b4" stroke="#b4b4b4" stroke-width="0.5" font-size="13.7" textLength="31.2" lengthAdjust="spacingAndGlyphs">450µ</text>
<text x="49.4" y="68.2" fill="#b4b4b4" stroke="#b4b4b4" stroke-width="0.5" font-size="13.7" textLength="66.6" lengthAdjust="spacingAndGlyphs">13.99923V</text>
<text x="49.4" y="92.2" fill="#b4b4b4" stroke="#b4b4b4" stroke-width="0.5" font-size="13.7" textLength="66.6" lengthAdjust="spacingAndGlyphs">13.99824V</text>
<text x="72.5" y="113.2" fill="#b4b4b4" stroke="#b4b4b4" stroke-width="0.5" font-size="13.7" textLength="43.5" lengthAdjust="spacingAndGlyphs">240mA</text>
<text x="76.3" y="137.2" fill="#b4b4b4" stroke="#b4b4b4" stroke-width="0.5" font-size="13.7" textLength="39.7" lengthAdjust="spacingAndGlyphs">-30mA</text>
<text x="26.7" y="174.2" fill="#b4b4b4" stroke="#b4b4b4" stroke-width="0.5" font-size="13.7" textLength="32.3" lengthAdjust="spacingAndGlyphs">2.7W</text>
<text x="22.0" y="202.2" fill="#b4b4b4" stroke="#b4b4b4" stroke-width="0.5" font-size="13.7" textLength="37.0" lengthAdjust="spacingAndGlyphs">-0.3W</text>
<text x="72.8" y="174.2" fill="#b4b4b4" stroke="#b4b4b4" stroke-width="0.5" font-size="13.7" textLength="43.2" lengthAdjust="spacingAndGlyphs">2.841V</text>
<text x="72.8" y="202.2" fill="#b4b4b4" stroke="#b4b4b4" stroke-width="0.5" font-size="13.7" textLength="43.2" lengthAdjust="spacingAndGlyphs">2.805V</text>
<text x="871.0" y="23.2" fill="#b4b4b4" stroke="#b4b4b4" stroke-width="0.5" font-size="13.7" textLength="14.2" lengthAdjust="spacingAndGlyphs">63</text>
<text x="871.0" y="47.2" fill="#b4b4b4" stroke="#b4b4b4" stroke-width="0.5" font-size="13.7" textLength="14.2" lengthAdjust="spacingAndGlyphs">52</text>
<text x="871.0" y="68.2" fill="#b4b4b4" stroke="#b4b4b4" stroke-width="0.5" font-size="13.7" textLength="39.0" lengthAdjust="spacingAndGlyphs">7.6mA</text>
<text x="871.0" y="92.2" fill="#b4b4b4" stroke="#b4b4b4" stroke-width="0.5" font-size="13.7" textLength="39.0" lengthAdjust="spacingAndGlyphs">6.5mA</text>
<text x="871.0" y="174.2" fill="#b4b4b4" stroke="#b4b4b4" stroke-width="0.5" font-size="13.7" textLength="54.3" lengthAdjust="spacingAndGlyphs">19.96mA</text>
<text x="871.0" y="202.2" fill="#b4b4b4" stroke="#b4b4b4" stroke-width="0.5" font-size="13.7" textLength="54.3" lengthAdjust="spacingAndGlyphs">19.72mA</text>
<text x="85.2" y="217.7" fill="#b4b4b4" stroke="#b4b4b4" stroke-width="0.5" font-size="13.7" textLength="78.6" lengthAdjust="spacingAndGlyphs">1.253300ms</text>
<text x="232.4" y="217.7" fill="#b4b4b4" stroke="#b4b4b4" stroke-width="0.5" font-size="13.7" textLength="78.6" lengthAdjust="spacingAndGlyphs">1.258952ms</text>
<text x="379.7" y="217.7" fill="#b4b4b4" stroke="#b4b4b4" stroke-width="0.5" font-size="13.7" textLength="78.6" lengthAdjust="spacingAndGlyphs">1.264604ms</text>
<text x="527.0" y="217.7" fill="#b4b4b4" stroke="#b4b4b4" stroke-width="0.5" font-size="13.7" textLength="78.6" lengthAdjust="spacingAndGlyphs">1.270256ms</text>
<text x="674.2" y="217.7" fill="#b4b4b4" stroke="#b4b4b4" stroke-width="0.5" font-size="13.7" textLength="78.6" lengthAdjust="spacingAndGlyphs">1.275908ms</text>
<text x="215.6" y="13.2" fill="#ff00ff" stroke="#ff00ff" stroke-width="0.5" font-size="13.7" textLength="60.3" lengthAdjust="spacingAndGlyphs">-I(V1)*V(F)</text>
<text x="460.9" y="13.2" fill="#0080ff" stroke="#0080ff" stroke-width="0.5" font-size="13.7" textLength="59.5" lengthAdjust="spacingAndGlyphs">I(D4)*V(X)</text>
<text x="653.8" y="13.2" fill="#80ff00" stroke="#80ff00" stroke-width="0.5" font-size="13.7" textLength="164.6" lengthAdjust="spacingAndGlyphs">I(D4)*V(X)/(-I(V1)*V(F))*1E2</text>
<text x="222.6" y="58.4" fill="#ff0000" stroke="#ff0000" stroke-width="0.5" font-size="13.7" textLength="48.4" lengthAdjust="spacingAndGlyphs">I(R5)/1A</text>
<text x="481.7" y="58.4" fill="#8000ff" stroke="#8000ff" stroke-width="0.5" font-size="13.7" textLength="18.6" lengthAdjust="spacingAndGlyphs">V(f)</text>
<text x="720.4" y="58.4" fill="#ff8000" stroke="#ff8000" stroke-width="0.5" font-size="13.7" textLength="30.6" lengthAdjust="spacingAndGlyphs">-I(V1)</text>
<text x="233.4" y="103.0" fill="#ff0080" stroke="#ff0080" stroke-width="0.5" font-size="13.7" textLength="25.6" lengthAdjust="spacingAndGlyphs">I(L1)</text>
<text x="470.2" y="103.0" fill="#00ff00" stroke="#00ff00" stroke-width="0.5" font-size="13.7" textLength="40.2" lengthAdjust="spacingAndGlyphs">-Ic(Q1)</text>
<text x="721.9" y="103.0" fill="#00f0ff" stroke="#00f0ff" stroke-width="0.5" font-size="13.7" textLength="28.7" lengthAdjust="spacingAndGlyphs">I(D1)</text>
<text x="136.0" y="148.0" fill="#00ff00" stroke="#00ff00" stroke-width="0.5" font-size="13.7" textLength="218.0" lengthAdjust="spacingAndGlyphs">V(N007,F)*Ic(Q1)+V(N004,F)*Ib(Q1)</text>
<text x="479.0" y="148.0" fill="#0000ff" stroke="#0000ff" stroke-width="0.5" font-size="13.7" textLength="24.1" lengthAdjust="spacingAndGlyphs">V[q]</text>
<text x="723.8" y="148.0" fill="#ffff00" stroke="#ffff00" stroke-width="0.5" font-size="13.7" textLength="24.2" lengthAdjust="spacingAndGlyphs">V[x]</text>
<text x="231.8" y="164.1" fill="#00ff80" stroke="#00ff80" stroke-width="0.5" font-size="13.7" textLength="28.4" lengthAdjust="spacingAndGlyphs">I(D4)</text>
</g>
<g fill="none" stroke="#0000ff" stroke-width="1" stroke-linecap="square" shape-rendering="crispEdges"><polyline points="254.5,273.5 254.5,254.5 494.5,254.5"/><polyline points="531.5,254.5 540.5,254.5"/><polyline points="254.5,310.5 254.5,319.5"/><polyline points="300.5,300.5 346.5,300.5"/><polyline points="346.5,300.5 346.5,310.5"/><polyline points="346.5,347.5 346.5,356.5"/><polyline points="171.5,337.5 171.5,319.5 189.5,319.5"/><polyline points="226.5,319.5 374.5,319.5"/><polyline points="420.5,319.5 420.5,384.5 420.5,384.5"/><polyline points="383.5,328.5 448.5,328.5"/><polyline points="300.5,347.5 300.5,356.5 346.5,356.5"/><polyline points="383.5,356.5 439.5,356.5"/><polyline points="476.5,356.5 485.5,356.5"/><polyline points="485.5,254.5 485.5,300.5"/><polyline points="485.5,356.5 485.5,384.5"/><polyline points="485.5,421.5 485.5,430.5"/><polyline points="485.5,374.5 522.5,374.5"/><polyline points="568.5,374.5 651.5,374.5"/><polyline points="697.5,374.5 790.5,374.5 790.5,393.5"/><polyline points="171.5,374.5 171.5,384.5 180.5,384.5"/><polyline points="217.5,384.5 318.5,384.5"/><polyline points="355.5,384.5 383.5,384.5"/><polyline points="420.5,384.5 420.5,384.5"/><polyline points="235.5,319.5 235.5,337.5"/><polyline points="235.5,430.5 679.5,430.5 679.5,421.5 688.5,421.5 688.5,430.5 790.5,430.5"/><polyline points="300.5,411.5 300.5,430.5"/><polyline points="383.5,254.5 383.5,273.5"/><polyline points="586.5,374.5 586.5,384.5"/><polyline points="586.5,421.5 586.5,430.5"/><polyline points="633.5,374.5 633.5,384.5"/><polyline points="707.5,411.5 707.5,430.5"/><polygon points="476.0,430.5 495.0,430.5 485.5,440.5" fill="none"/><polygon points="577.0,300.5 596.0,300.5 586.5,310.5" fill="none"/><polygon points="540.5,244.5 540.5,264.5 551.5,254.5" fill="none"/></g>
<g fill="none" stroke="#000080" stroke-width="1" stroke-linecap="square" shape-rendering="crispEdges"><polyline points="300.5,254.5 300.5,259.5 309.5,263.5 291.5,273.5 309.5,282.5 291.5,291.5 300.5,296.5 300.5,300.5" /><polyline points="300.5,300.5 300.5,305.5 309.5,310.5 291.5,319.5 309.5,328.5 291.5,337.5 300.5,342.5 300.5,347.5" /><polyline points="235.5,337.5 235.5,342.5 244.5,347.5 226.5,356.5 244.5,365.5 226.5,374.5 235.5,379.5 235.5,384.5" /><polyline points="235.5,384.5 235.5,388.5 244.5,393.5 226.5,402.5 244.5,411.5 226.5,421.5 235.5,425.5 235.5,430.5" /><polyline points="383.5,384.5 383.5,388.5 392.5,393.5 374.5,402.5 392.5,411.5 374.5,421.5 383.5,425.5 383.5,430.5" /><polyline points="633.5,384.5 633.5,388.5 642.5,393.5 623.5,402.5 642.5,411.5 623.5,421.5 633.5,425.5 633.5,430.5" /><polyline points="374.5,319.5 379.5,319.5 383.5,310.5 392.5,328.5 402.5,310.5 411.5,328.5 415.5,319.5 420.5,319.5" /><polyline points="651.5,374.5 656.5,374.5 660.5,365.5 670.5,384.5 679.5,365.5 688.5,384.5 693.5,374.5 697.5,374.5" /><polyline points="254.5,273.5 254.5,289.5" /><polyline points="244.5,289.5 263.5,289.5" /><polyline points="244.5,294.5 263.5,294.5" /><polyline points="254.5,294.5 254.5,310.5" /><polyline points="586.5,384.5 586.5,400.5" /><polyline points="577.5,400.5 596.5,400.5" /><polyline points="577.5,404.5 596.5,404.5" /><polyline points="586.5,404.5 586.5,421.5" /><polyline points="790.5,393.5 790.5,409.5" /><polyline points="781.5,409.5 799.5,409.5" /><polyline points="781.5,414.5 799.5,414.5" /><polyline points="790.5,414.5 790.5,430.5" /><polyline points="180.5,384.5 196.5,384.5" /><polyline points="196.5,374.5 196.5,393.5" /><polyline points="201.5,374.5 201.5,393.5" /><polyline points="201.5,384.5 217.5,384.5" /><polyline points="494.5,254.5 510.5,254.5" /><polyline points="510.5,245.5 510.5,263.5" /><polyline points="515.5,245.5 515.5,263.5" /><polyline points="515.5,254.5 531.5,254.5" /><polyline points="171.5,374.5 171.5,363.5" /><polygon points="161.5,363.5 180.5,363.5 171.5,349.5" /><polyline points="161.5,349.5 180.5,349.5" /><polyline points="171.5,349.5 171.5,337.5" /><polyline points="383.5,384.5 395.5,384.5" /><polygon points="395.5,374.5 395.5,393.5 409.5,384.5" /><polyline points="409.5,374.5 409.5,393.5" /><polyline points="409.5,384.5 420.5,384.5" /><polyline points="476.5,356.5 464.5,356.5" /><polygon points="464.5,347.5 464.5,365.5 450.5,356.5" /><polyline points="450.5,347.5 450.5,365.5" /><polyline points="450.5,356.5 439.5,356.5" /><polyline points="346.5,347.5 346.5,335.5" /><polygon points="337.5,335.5 355.5,335.5 346.5,321.5" /><polyline points="340.5,317.5 337.5,317.5 337.5,321.5 355.5,321.5 355.5,325.5 353.5,325.5" /><polyline points="346.5,321.5 346.5,310.5" /><polyline points="485.5,421.5 485.5,409.5" /><polygon points="476.5,409.5 494.5,409.5 485.5,395.5" /><polyline points="478.5,391.5 476.5,391.5 476.5,395.5 494.5,395.5 494.5,399.5 491.5,399.5" /><polyline points="485.5,395.5 485.5,384.5" /><polyline points="346.5,356.5 358.5,356.5" /><polygon points="358.5,347.5 358.5,365.5 372.5,356.5" /><polyline points="376.5,350.5 376.5,347.5 372.5,347.5 372.5,365.5 368.5,365.5 368.5,362.5" /><polyline points="372.5,356.5 383.5,356.5" /><polyline points="318.5,384.5 330.5,384.5" /><polygon points="330.5,374.5 330.5,393.5 344.5,384.5" /><polyline points="348.5,377.5 348.5,374.5 344.5,374.5 344.5,393.5 340.5,393.5 340.5,390.5" /><polyline points="344.5,384.5 355.5,384.5" /><polyline points="189.5,319.5 201.5,319.5" /><polygon points="201.5,328.5 201.5,310.5 214.5,319.5" /><polyline points="214.5,328.5 214.5,310.5" /><polyline points="214.5,319.5 226.5,319.5" /><path d="M204.0,305.7 L201.9,304.2 L201.1,301.9 L201.4,299.6 L203.1,297.9 L206.3,296.4 L208.6,295.0 L209.5,293.2 L209.5,287.5"/><path d="M207.1,290.9 L208.9,287.2 L212.6,289.5"/><path d="M213.2,305.7 L211.2,304.2 L210.3,301.9 L210.6,299.6 L212.3,297.9 L215.5,296.4 L217.8,295.0 L218.8,293.2 L218.8,287.5"/><path d="M216.4,290.9 L218.1,287.2 L221.9,289.5"/><polyline points="707.5,374.5 707.5,386.5" /><polygon points="697.5,386.5 716.5,386.5 707.5,400.5" /><polyline points="697.5,400.5 716.5,400.5" /><polyline points="707.5,400.5 707.5,411.5" /><path d="M721.1,389.2 L722.5,387.2 L724.8,386.3 L727.2,386.6 L728.9,388.3 L730.3,391.5 L731.8,393.8 L733.5,394.8 L739.3,394.8"/><path d="M735.8,392.4 L739.6,394.1 L737.3,397.9"/><path d="M721.1,398.5 L722.5,396.4 L724.8,395.6 L727.2,395.9 L728.9,397.6 L730.3,400.8 L731.8,403.1 L733.5,404.0 L739.3,404.0"/><path d="M735.8,401.6 L739.6,403.4 L737.3,407.1"/><polyline points="263.5,384.5 272.5,384.5" /><polyline points="272.5,365.5 272.5,402.5" /><polyline points="272.5,374.5 300.5,356.5" /><polyline points="272.5,393.5 300.5,411.5" /><polygon points="300.5,411.5 288.5,400.5 284.5,404.5" /><polyline points="346.5,356.5 355.5,356.5" /><polyline points="355.5,337.5 355.5,374.5" /><polyline points="355.5,347.5 383.5,328.5" /><polyline points="355.5,365.5 383.5,384.5" /><polygon points="383.5,384.5 372.5,372.5 367.5,377.5" /><polyline points="346.5,300.5 355.5,300.5" /><polyline points="355.5,282.5 355.5,319.5" /><polyline points="355.5,291.5 383.5,273.5" /><polyline points="355.5,310.5 383.5,328.5" /><polygon points="355.5,291.5 367.5,280.5 372.5,284.5" /><polyline points="448.5,328.5 457.5,328.5" /><polyline points="457.5,310.5 457.5,347.5" /><polyline points="457.5,319.5 485.5,300.5" /><polyline points="457.5,337.5 485.5,356.5" /><polygon points="457.5,319.5 469.5,307.5 473.5,312.5" /><line x1="586.5" y1="254.5" x2="586.5" y2="259.5"/><circle cx="586.5" cy="277.6" r="18.5"/><line x1="586.5" y1="296.5" x2="586.5" y2="300.5"/><line x1="581.0" y1="266.5" x2="592.0" y2="266.5"/><line x1="586.5" y1="262.5" x2="586.5" y2="271.5"/><line x1="581.0" y1="289.5" x2="592.0" y2="289.5"/><path d="M522.5,374.5 L522.5,372 C522.5,363.4 540.8,363.4 540.8,372 C540.8,378 539.8,381.5 538.6,381.5 C537.4,381.5 536.4,378 536.4,372 C536.4,363.4 554.8,363.4 554.8,372 C554.8,378 553.8,381.5 552.6,381.5 C551.4,381.5 550.4,378 550.4,372 C550.4,363.4 568.5,363.4 568.5,372 L568.5,374.5"/><circle cx="561" cy="378.8" r="1.8" shape-rendering="geometricPrecision"/></g>
<g shape-rendering="crispEdges"><rect x="298.0" y="252.0" width="5" height="5" fill="#0000ff" stroke="none"/><rect x="381.0" y="252.0" width="5" height="5" fill="#0000ff" stroke="none"/><rect x="483.0" y="252.0" width="5" height="5" fill="#0000ff" stroke="none"/><rect x="298.0" y="298.0" width="5" height="5" fill="#0000ff" stroke="none"/><rect x="344.0" y="298.0" width="5" height="5" fill="#0000ff" stroke="none"/><rect x="233.0" y="317.0" width="5" height="5" fill="#0000ff" stroke="none"/><rect x="252.0" y="317.0" width="5" height="5" fill="#0000ff" stroke="none"/><rect x="381.0" y="326.0" width="5" height="5" fill="#0000ff" stroke="none"/><rect x="298.0" y="354.0" width="5" height="5" fill="#0000ff" stroke="none"/><rect x="344.0" y="354.0" width="5" height="5" fill="#0000ff" stroke="none"/><rect x="418.0" y="354.0" width="5" height="5" fill="#0000ff" stroke="none"/><rect x="483.0" y="354.0" width="5" height="5" fill="#0000ff" stroke="none"/><rect x="483.0" y="372.0" width="5" height="5" fill="#0000ff" stroke="none"/><rect x="233.0" y="382.0" width="5" height="5" fill="#0000ff" stroke="none"/><rect x="261.0" y="382.0" width="5" height="5" fill="#0000ff" stroke="none"/><rect x="381.0" y="382.0" width="5" height="5" fill="#0000ff" stroke="none"/><rect x="584.0" y="372.0" width="5" height="5" fill="#0000ff" stroke="none"/><rect x="631.0" y="372.0" width="5" height="5" fill="#0000ff" stroke="none"/><rect x="705.0" y="372.0" width="5" height="5" fill="#0000ff" stroke="none"/><rect x="298.0" y="428.0" width="5" height="5" fill="#0000ff" stroke="none"/><rect x="381.0" y="428.0" width="5" height="5" fill="#0000ff" stroke="none"/><rect x="483.0" y="428.0" width="5" height="5" fill="#0000ff" stroke="none"/><rect x="584.0" y="428.0" width="5" height="5" fill="#0000ff" stroke="none"/><rect x="631.0" y="428.0" width="5" height="5" fill="#0000ff" stroke="none"/><rect x="705.0" y="428.0" width="5" height="5" fill="#0000ff" stroke="none"/></g>
<circle cx="629.7" cy="318.4" r="4.5" fill="#ff0000"/><circle cx="689.5" cy="413.4" r="4.5" fill="#ff0000"/>
<g font-family="'DejaVu Sans', 'Liberation Sans', sans-serif" font-weight="bold" font-size="11.5" style="white-space:pre">
<text x="286.9" y="249.8" fill="#000000" textLength="7.6" lengthAdjust="spacingAndGlyphs">F</text>
<text x="332.1" y="244.7" fill="#000000" textLength="149.0" lengthAdjust="spacingAndGlyphs">.tran 0 1 0 60u startup</text>
<text x="311.0" y="272.0" fill="#000000" textLength="17.4" lengthAdjust="spacingAndGlyphs">R4</text>
<text x="311.0" y="292.8" fill="#000000" textLength="32.0" lengthAdjust="spacingAndGlyphs">100k</text>
<text x="311.0" y="319.1" fill="#000000" textLength="17.4" lengthAdjust="spacingAndGlyphs">R6</text>
<text x="311.0" y="338.9" fill="#000000" textLength="23.7" lengthAdjust="spacingAndGlyphs">10k</text>
<text x="324.6" y="315.1" fill="#000000" textLength="17.4" lengthAdjust="spacingAndGlyphs">D5</text>
<text x="281.5" y="351.4" fill="#000000" textLength="60.2" lengthAdjust="spacingAndGlyphs">BAT46WJ</text>
<text x="257.9" y="281.6" fill="#000000" textLength="16.0" lengthAdjust="spacingAndGlyphs">C1</text>
<text x="257.9" y="309.2" fill="#000000" textLength="23.8" lengthAdjust="spacingAndGlyphs">10n</text>
<text x="199.1" y="283.6" fill="#000000" textLength="17.4" lengthAdjust="spacingAndGlyphs">D2</text>
<text x="175.8" y="341.1" fill="#000000" textLength="63.9" lengthAdjust="spacingAndGlyphs">QTLP690C</text>
<text x="148.8" y="341.1" fill="#000000" textLength="17.1" lengthAdjust="spacingAndGlyphs">D3</text>
<text x="118.1" y="378.1" fill="#000000" textLength="47.9" lengthAdjust="spacingAndGlyphs">1N4148</text>
<text x="189.1" y="370.2" fill="#000000" textLength="17.1" lengthAdjust="spacingAndGlyphs">C3</text>
<text x="188.0" y="405.5" fill="#000000" textLength="20.3" lengthAdjust="spacingAndGlyphs">.1µ</text>
<text x="165.6" y="396.4" fill="#000000" textLength="10.0" lengthAdjust="spacingAndGlyphs">Q</text>
<text x="246.7" y="354.8" fill="#000000" textLength="17.1" lengthAdjust="spacingAndGlyphs">R5</text>
<text x="247.2" y="376.2" fill="#000000" textLength="23.9" lengthAdjust="spacingAndGlyphs">135</text>
<text x="246.7" y="400.9" fill="#000000" textLength="17.1" lengthAdjust="spacingAndGlyphs">R2</text>
<text x="247.2" y="422.1" fill="#000000" textLength="15.8" lengthAdjust="spacingAndGlyphs">1k</text>
<text x="294.5" y="378.8" fill="#000000" textLength="17.4" lengthAdjust="spacingAndGlyphs">Q3</text>
<text x="294.8" y="399.6" fill="#000000" textLength="47.7" lengthAdjust="spacingAndGlyphs">2N5089</text>
<text x="328.1" y="370.2" fill="#000000" textLength="16.8" lengthAdjust="spacingAndGlyphs">D6</text>
<text x="306.6" y="405.2" fill="#000000" textLength="60.2" lengthAdjust="spacingAndGlyphs">BAT46WJ</text>
<text x="355.6" y="343.0" fill="#000000" textLength="17.5" lengthAdjust="spacingAndGlyphs">D8</text>
<text x="334.8" y="377.3" fill="#000000" textLength="59.5" lengthAdjust="spacingAndGlyphs">BAT46WJ</text>
<text x="378.8" y="351.6" fill="#000000" textLength="17.9" lengthAdjust="spacingAndGlyphs">Q4</text>
<text x="379.1" y="370.5" fill="#000000" textLength="47.7" lengthAdjust="spacingAndGlyphs">2N5089</text>
<text x="394.5" y="370.5" fill="#000000" textLength="17.0" lengthAdjust="spacingAndGlyphs">D7</text>
<text x="379.1" y="404.9" fill="#000000" textLength="47.1" lengthAdjust="spacingAndGlyphs">1N4148</text>
<text x="394.5" y="401.2" fill="#000000" textLength="17.0" lengthAdjust="spacingAndGlyphs">R1</text>
<text x="395.3" y="422.2" fill="#000000" textLength="23.0" lengthAdjust="spacingAndGlyphs">10k</text>
<text x="388.1" y="306.6" fill="#000000" textLength="17.4" lengthAdjust="spacingAndGlyphs">R8</text>
<text x="379.1" y="340.8" fill="#000000" textLength="34.8" lengthAdjust="spacingAndGlyphs">2meg</text>
<text x="394.8" y="314.9" fill="#000000" textLength="17.4" lengthAdjust="spacingAndGlyphs">Q2</text>
<text x="394.8" y="293.4" fill="#000000" textLength="47.9" lengthAdjust="spacingAndGlyphs">2N5087</text>
<text x="447.6" y="343.2" fill="#000000" textLength="17.1" lengthAdjust="spacingAndGlyphs">D9</text>
<text x="433.0" y="377.7" fill="#000000" textLength="47.8" lengthAdjust="spacingAndGlyphs">1N4148</text>
<text x="495.9" y="321.5" fill="#000000" textLength="48.0" lengthAdjust="spacingAndGlyphs">2N2907</text>
<text x="495.4" y="341.3" fill="#000000" textLength="17.1" lengthAdjust="spacingAndGlyphs">Q1</text>
<text x="462.9" y="388.3" fill="#000000" textLength="16.7" lengthAdjust="spacingAndGlyphs">D1</text>
<text x="419.8" y="424.8" fill="#000000" textLength="60.2" lengthAdjust="spacingAndGlyphs">BAT46WJ</text>
<text x="504.5" y="241.1" fill="#000000" textLength="16.7" lengthAdjust="spacingAndGlyphs">C5</text>
<text x="497.0" y="275.6" fill="#000000" textLength="32.0" lengthAdjust="spacingAndGlyphs">150µ</text>
<text x="599.0" y="258.4" fill="#000000" textLength="17.8" lengthAdjust="spacingAndGlyphs">V1</text>
<text x="600.5" y="274.1" fill="#000000" textLength="16.0" lengthAdjust="spacingAndGlyphs">14</text>
<text x="600.2" y="291.3" fill="#000000" textLength="52.7" lengthAdjust="spacingAndGlyphs">Rser=.2</text>
<text x="536.5" y="361.1" fill="#000000" textLength="15.0" lengthAdjust="spacingAndGlyphs">L1</text>
<text x="532.9" y="393.3" fill="#000000" textLength="24.1" lengthAdjust="spacingAndGlyphs">10µ</text>
<text x="590.6" y="370.2" fill="#000000" textLength="9.9" lengthAdjust="spacingAndGlyphs">Q</text>
<text x="590.6" y="392.2" fill="#000000" textLength="16.7" lengthAdjust="spacingAndGlyphs">C2</text>
<text x="590.6" y="420.1" fill="#000000" textLength="16.7" lengthAdjust="spacingAndGlyphs">5µ</text>
<text x="664.6" y="361.1" fill="#000000" textLength="16.3" lengthAdjust="spacingAndGlyphs">R7</text>
<text x="670.1" y="396.1" fill="#000000" textLength="7.2" lengthAdjust="spacingAndGlyphs">1</text>
<text x="643.9" y="401.1" fill="#000000" textLength="17.1" lengthAdjust="spacingAndGlyphs">R3</text>
<text x="644.2" y="422.2" fill="#000000" textLength="23.4" lengthAdjust="spacingAndGlyphs">10k</text>
<text x="710.6" y="378.5" fill="#000000" textLength="17.4" lengthAdjust="spacingAndGlyphs">D4</text>
<text x="710.6" y="415.4" fill="#000000" textLength="64.6" lengthAdjust="spacingAndGlyphs">AOT-2015</text>
<text x="756.4" y="370.5" fill="#000000" textLength="10.2" lengthAdjust="spacingAndGlyphs">X</text>
<text x="793.8" y="401.4" fill="#000000" textLength="15.9" lengthAdjust="spacingAndGlyphs">C7</text>
<text x="793.8" y="429.5" fill="#000000" textLength="24.2" lengthAdjust="spacingAndGlyphs">10µ</text>
<text x="457.0" y="295.3" fill="#0a0ac8" textLength="86.9" lengthAdjust="spacingAndGlyphs">12.9mW @ Q1</text>
<text x="636.6" y="254.4" fill="#0a0ac8" textLength="95.6" lengthAdjust="spacingAndGlyphs">Efficiency 57%</text>
<text x="710.3" y="281.1" fill="#0a0ac8" textLength="71.7" lengthAdjust="spacingAndGlyphs">TOT. 98mW</text>
<text x="710.3" y="300.4" fill="#0a0ac8" textLength="71.7" lengthAdjust="spacingAndGlyphs">conversion</text>
<text x="710.3" y="316.1" fill="#0a0ac8" textLength="69.7" lengthAdjust="spacingAndGlyphs">loss 42mW</text>
<text x="710.3" y="337.2" fill="#0a0ac8" textLength="68.1" lengthAdjust="spacingAndGlyphs">LED 56mW</text>
<text x="558.9" y="327.8" fill="#0a0ac8" textLength="63.4" lengthAdjust="spacingAndGlyphs">quiescent</text>
<text x="558.9" y="344.3" fill="#0a0ac8" textLength="105.0" lengthAdjust="spacingAndGlyphs">1.72mA 24.1mW</text>
<text x="605.5" y="364.2" fill="#0a0ac8" textLength="36.2" lengthAdjust="spacingAndGlyphs">2.83V</text>
<text x="707.5" y="364.2" fill="#0a0ac8" textLength="36.7" lengthAdjust="spacingAndGlyphs">2.81V</text>
<text x="739.1" y="388.3" fill="#0a0ac8" textLength="49.2" lengthAdjust="spacingAndGlyphs">19.8mA</text>
<text transform="translate(590.8,254.8) rotate(-90)" x="0" y="0" fill="#000000" textLength="8.6" lengthAdjust="spacingAndGlyphs">F</text>
<rect x="586" y="246" width="1" height="9" fill="#000080"/>
</g>
</svg>
</body></html>
